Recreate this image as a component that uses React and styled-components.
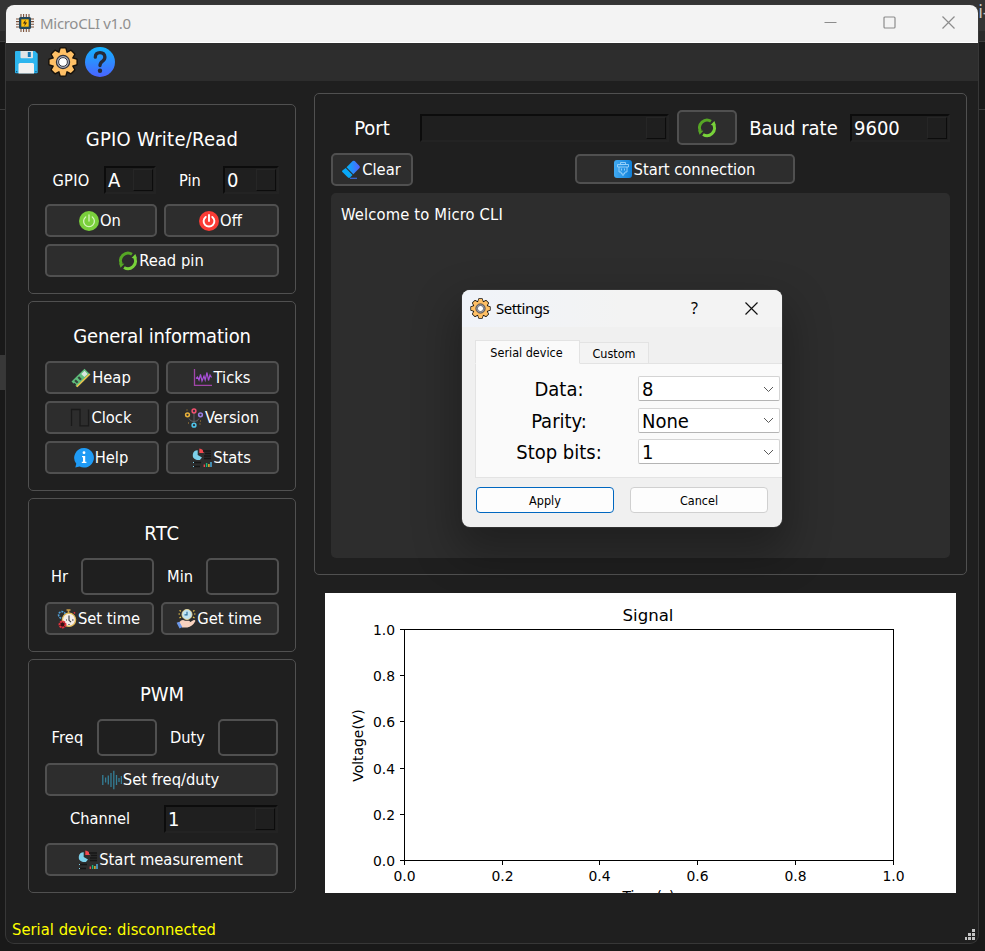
import React from "react";
import styled, { createGlobalStyle, css } from "styled-components";

const Global = createGlobalStyle`
  * { box-sizing: border-box; }
  body { margin: 0; background: #191919; }
  svg { display: block; flex: none; }
`;

const uiFont = css`
  font-family: "DejaVu Sans Condensed", "DejaVu Sans", sans-serif;
  font-stretch: condensed;
`;

/* ---------- desktop behind the window ---------- */
const Desktop = styled.div`
  position: relative;
  width: 985px;
  height: 951px;
  overflow: hidden;
  background: #191919;
`;
const BackBar = styled.div`
  height: ${(p) => p.$h}px;
  background: ${(p) => p.$bg};
`;
const BackText = styled.div`
  font: 17px/24px "DejaVu Sans", sans-serif;
  color: #c8c8c8;
  text-align: right;
  margin-right: -4px;
`;
const BackScroll = styled.div`
  width: 6px;
  height: 35px;
  background: #383838;
`;

/* ---------- main window ---------- */
const Window = styled.main`
  position: absolute;
  left: 6px;
  top: 5px;
  width: 972px;
  height: 938px;
  background: #1f1f1f;
  border-radius: 8px;
  box-shadow: 0 0 0 1px #373737;
  display: flex;
  flex-direction: column;
  overflow: hidden;
  color: #fff;
  ${uiFont}
`;
const TitleBar = styled.header`
  height: 38px;
  flex: none;
  background: #f3f3f3;
  border-bottom: 1px solid #fff;
  display: flex;
  align-items: center;
  padding: 0 23px 2px 10px;
`;
const WindowTitle = styled.h1`
  margin: 0 auto 0 6px;
  font: 400 15px "Noto Sans", sans-serif;
  color: #8f8f8f;
  letter-spacing: -0.3px;
`;
const Controls = styled.div`
  display: flex;
  gap: 46px;
`;
const Toolbar = styled.nav`
  height: 38px;
  flex: none;
  background: #2d2d2d;
  display: flex;
  align-items: center;
  padding: 0 5px;
  gap: 7px;
`;
const Body = styled.div`
  flex: 1;
  min-height: 0;
  display: flex;
  align-items: flex-start;
`;
const Sidebar = styled.div`
  width: 268px;
  margin: 23px 0 0 22px;
  display: flex;
  flex-direction: column;
  gap: 7px;
`;
const Main = styled.div`
  width: 653px;
  margin: 12px 0 0 18px;
`;
const Panel = styled.section`
  height: ${(p) => p.$h}px;
  border: 1px solid #505050;
  border-radius: 5px;
  padding: 0 16px 16px;
  display: flex;
  flex-direction: column;
  gap: 7px;
`;
const PanelTitle = styled.h2`
  margin: 0;
  padding-top: ${(p) => p.$top || 16}px;
  flex: 1;
  display: flex;
  align-items: center;
  justify-content: center;
  font-weight: 400;
  font-size: 20px;
  letter-spacing: ${(p) => p.$ls || 0}px;
`;
const Row = styled.div`
  display: grid;
  grid-template-columns: ${(p) => p.$cols};
  height: ${(p) => p.$h || 33}px;
  align-items: center;
  margin-bottom: ${(p) => p.$mb || 0}px;
`;
const Label = styled.span`
  font-size: ${(p) => p.$size || 16.3}px;
  letter-spacing: ${(p) => p.$ls || 0}px;
  line-height: 20px;
  padding-top: 1px;
  text-align: center;
  white-space: nowrap;
`;
const ButtonBox = styled.button`
  height: ${(p) => p.$h || 33}px;
  width: 100%;
  flex: none;
  background: #2d2d2d;
  border: 2px solid #505050;
  border-radius: 5px;
  color: #fff;
  display: flex;
  align-items: center;
  justify-content: center;
  gap: 1px;
  padding: 0;
  font-size: 16.4px;
  ${uiFont}
  white-space: nowrap;
`;
const Caption = styled.span`
  line-height: 20px;
  padding-top: 1px;
  margin-right: 2px;
`;
const Field = styled.input`
  width: 100%;
  height: 37px;
  background: #1f1f1f;
  border: 2px solid #505050;
  border-radius: 5px;
`;
const ComboBox = styled.div`
  width: 100%;
  height: 28px;
  border: 2px solid;
  border-color: #0c0c0c #232323 #232323 #0c0c0c;
  background: #1f1f1f;
  display: flex;
  align-items: center;
  justify-content: space-between;
  padding: 0 1px 0 2px;
  font-size: 20px;
`;
const ComboArrow = styled.i`
  width: 20px;
  height: 22px;
  border: 1px solid;
  border-color: #262626 #0c0c0c #0c0c0c #262626;
`;
const Group = styled.section`
  height: 482px;
  border: 1px solid #505050;
  border-radius: 5px;
  padding: 16px;
`;
const ActionRow = styled.div`
  display: flex;
  justify-content: space-between;
  align-items: flex-start;
  height: 33px;
  margin: 8px 155px 7px 0;
`;
const Slot = styled.div`
  width: ${(p) => p.$w}px;
  padding-top: ${(p) => p.$top || 0}px;
`;
const Console = styled.div`
  height: 365px;
  background: #2d2d2d;
  border-radius: 5px;
  padding: 12px 10px;
  font-size: 16.4px;
  line-height: 20px;
  letter-spacing: 0.16px;
`;
const Plot = styled.figure`
  margin: 18px 0 0 11px;
  width: 631px;
  height: 300px;
  background: #fff;
`;
const StatusBar = styled.footer`
  height: 28px;
  flex: none;
  display: flex;
  align-items: center;
  justify-content: space-between;
  padding: 0 3px 0 6px;
  font-size: 16.4px;
  letter-spacing: 0.04px;
  color: #ff0;
`;
const SizeGrip = styled.svg`
  margin-top: 11px;
`;

/* ---------- settings dialog ---------- */
const Dialog = styled.div`
  position: absolute;
  left: 462px;
  top: 290px;
  width: 320px;
  height: 237px;
  border-radius: 8px;
  background: #f0f0f0;
  box-shadow: 0 0 0 1px rgba(60, 60, 60, 0.6), 0 20px 44px 6px rgba(0, 0, 0, 0.3);
  overflow: hidden;
  color: #000;
  ${uiFont}
`;
const DialogBar = styled.header`
  height: 37px;
  background: linear-gradient(90deg, #f0f3f9, #f3f3f3 50%);
  display: flex;
  align-items: center;
  padding: 0 24px 1px 8px;
`;
const DialogTitle = styled.h2`
  margin: 0 auto 0 5px;
  font: 400 15px "Noto Sans", sans-serif;
  letter-spacing: -0.5px;
`;
const HelpMark = styled.span`
  font: 400 16px "Noto Sans", sans-serif;
  margin-right: 47px;
`;
const Tabs = styled.div`
  display: flex;
  align-items: flex-end;
  height: 24px;
  margin: 13px 0 0 13px;
`;
const Tab = styled.div`
  width: ${(p) => p.$w}px;
  height: ${(p) => (p.$on ? 24 : 22)}px;
  border: 1px solid #e3e3e3;
  border-bottom-color: ${(p) => (p.$on ? "#fafafa" : "#e3e3e3")};
  border-left-width: ${(p) => (p.$on ? 1 : 0)}px;
  background: ${(p) => (p.$on ? "#fafafa" : "#f3f3f3")};
  display: flex;
  align-items: center;
  justify-content: center;
  padding-right: ${(p) => (p.$on ? 2 : 0)}px;
  font-size: 12.5px;
`;
const TabPane = styled.div`
  height: 115px;
  margin: -1px 0 0 13px;
  border: 1px solid #e3e3e3;
  border-right: 0;
  background: #fafafa;
  padding: 12px 2px 0 0;
  display: grid;
  grid-template-columns: 162px 142px;
  grid-auto-rows: 25px;
  row-gap: 6.5px;
  align-content: start;
  align-items: center;
`;
const SettingLabel = styled(Label)`
  font-size: 20px;
  padding: 1px 0 0 4px;
`;
const Select = styled.div`
  height: 25px;
  border: 1px solid #d4d4d4;
  border-bottom-color: #b4b4b4;
  border-radius: 2px;
  background: #fff;
  display: flex;
  align-items: center;
  justify-content: space-between;
  padding: 1px 5px 0 3px;
  font-size: 20px;
`;
const DialogActions = styled.div`
  display: flex;
  gap: 16px;
  padding: 9px 14px;
`;
const DialogButton = styled.button`
  flex: 1;
  height: 26px;
  padding: 0;
  background: #fdfdfd;
  border: 1px solid ${(p) => (p.$primary ? "#0067c0" : "#d0d0d0")};
  border-radius: 4px;
  color: #000;
  font-size: 12.5px;
  ${uiFont}
`;

/* ---------- icons ---------- */
const ChipIcon = () => (
  <svg width="18" height="18" viewBox="0 0 18 18">
    <path d="M5 0v18M7.6 0v18M10.3 0v18M13 0v18M0 5h18M0 7.6h18M0 10.3h18M0 13h18" stroke="#7a5038" strokeWidth="1.1" />
    <rect x="3" y="3" width="12" height="12" rx="1.5" fill="#23485c" />
    <rect x="5.3" y="5.3" width="7.4" height="7.4" fill="#fdbf10" />
    <path d="M9.6 5.8 6.9 9.4h2l-.6 2.8 2.8-3.6H9.2z" fill="#3b2b14" />
  </svg>
);
const SaveIcon = () => (
  <svg width="30" height="30" viewBox="0 0 30 30">
    <path d="M5 4h19l2.700 2.700v18.600q0 1-1 1H5q-1 0-1-1V5q0-1 1-1z" fill="#2db5ee" />
    <path d="M9.500 4h12.500v6.200q0 1-1 1H10.500q-1 0-1-1z" fill="#dfe4e6" />
    <rect x="16.800" y="5" width="3" height="5" fill="#1478b4" />
    <path d="M7.500 17.500q0-1.500 1.500-1.500h12.500q1.500 0 1.500 1.500v9H7.500z" fill="#f1f1f1" />
    <path d="M5 24h1.300v1.300H5zM24.300 24h1.300v1.300h-1.300z" fill="#145a86" />
  </svg>
);
const TEETH = [0, 45, 90, 135, 180, 225, 270, 315];
const TOOTH = "M-4.200-7-2.300-13.400H2.300L4.200-7z";
const GearIcon = ({ size, line }) => (
  <svg width={size} height={size} viewBox="-15 -15 30 30">
    <g stroke="#15100a" strokeWidth={line} strokeLinejoin="round">
      {TEETH.map((a) => (
        <path key={a} d={TOOTH} transform={`rotate(${a})`} />
      ))}
      <circle r="9.800" />
    </g>
    <g fill="#ffc066">
      {TEETH.map((a) => (
        <path key={a} d={TOOTH} transform={`rotate(${a})`} />
      ))}
      <circle r="9.800" />
    </g>
    <circle r="6.600" fill="#a9adbb" stroke="#33333a" strokeWidth="1.200" />
    <circle r="4.400" fill="#fff" stroke="#3a3a42" strokeWidth="1" />
  </svg>
);
const QuestionIcon = () => (
  <svg width="30" height="30" viewBox="0 0 30 30">
    <defs>
      <linearGradient id="ask" x2="0" y2="1">
        <stop stopColor="#12b4ff" />
        <stop offset="1" stopColor="#4a63ff" />
      </linearGradient>
    </defs>
    <circle cx="15" cy="15" r="15" fill="url(#ask)" />
    <path d="M10.300 10.200Q10.300 5.600 15 5.600t4.900 4.500q0 2.600-2.500 4.200Q15 15.800 15 18.500" fill="none" stroke="#262b38" strokeWidth="3.300" strokeLinecap="round" />
    <circle cx="15" cy="23.800" r="2.200" fill="#262b38" />
  </svg>
);
const PowerIcon = ({ color, ink, width }) => (
  <svg width="20" height="20" viewBox="0 0 20 20">
    <circle cx="10" cy="10" r="10" fill={color} />
    <path d="M6.700 5.900a5.400 5.400 0 1 0 6.600 0M10 4v6" fill="none" stroke={ink} strokeWidth={width} strokeLinecap="round" />
  </svg>
);
const SyncIcon = () => (
  <svg width="20" height="20" viewBox="0 0 20 20">
    <path d="M14 3.200A7.500 7.500 0 0 0 3.400 13" fill="none" stroke="#56a625" strokeWidth="2.900" />
    <path d="M1 12.200 6.400 12.800 2.600 16.800z" fill="#56a625" />
    <path d="M6 16.500A7.500 7.500 0 0 0 16.600 6.700" fill="none" stroke="#78d23a" strokeWidth="2.900" />
    <path d="M19 7.500 13.600 6.900 17.400 2.900z" fill="#78d23a" />
  </svg>
);
const RamIcon = () => (
  <svg width="20" height="20" viewBox="0 0 20 20">
    <path d="M.5 13.500 13.500.7l5.800 5.800L6.300 19.300l-1.800-1.800.6-1-1.400-1.400-1.200.4z" fill="#5fbd7c" />
    <path d="m6.300 19.300 13-12.800-1.100-1.100-13 12.800z" fill="#f0c04a" />
    <path d="m10.200 5.900 3.300-3.200 3.200 3.200-3.300 3.200z" fill="#d9e6df" />
    <path d="m3.300 13 1.600-1.600 2.600 2.600-1.600 1.600zm3.200-3.200 1.600-1.600 2.700 2.700-1.600 1.600z" fill="#35453c" />
  </svg>
);
const TicksIcon = () => (
  <svg width="20" height="20" viewBox="0 0 20 20" fill="none">
    <path d="M1.500 1v16.300H19" stroke="#a046a8" strokeWidth="1.300" />
    <path d="M3 10.500 4.500 9 6 12 7.500 6.500 9 13 11 8l1.200 4L14 4.500l1.500 8L17 7l1.500 2.500" stroke="#a84fd8" strokeWidth="1.200" />
  </svg>
);
const ClockIcon = () => (
  <svg width="20" height="20" viewBox="0 0 20 20">
    <path d="M1.500 18V1.500h8.500v16.300h8.500V1.500" fill="none" stroke="#1a1a1a" strokeWidth="1.300" />
  </svg>
);
const VersionIcon = () => (
  <svg width="20" height="20" viewBox="0 0 20 20" fill="none">
    <path d="M5 10.500q1 3 5 3t5-3M10 5v9" stroke="#65656b" strokeWidth=".9" />
    <path d="M2.500 2h1M16 13h1M4 15h1M15.500 16h1" stroke="#b98a3a" />
    <g fill="#33333a" strokeWidth="1.500">
      <circle cx="10" cy="3" r="1.900" stroke="#f0506e" />
      <circle cx="3.500" cy="6.800" r="1.900" stroke="#e8b13a" />
      <circle cx="16.500" cy="6.800" r="1.900" stroke="#9a7de0" />
      <circle cx="10" cy="17.200" r="1.900" stroke="#4fc3e8" />
    </g>
  </svg>
);
const InfoIcon = () => (
  <svg width="20" height="20" viewBox="0 0 20 20">
    <path d="M10 0a9.800 9.800 0 1 1-4.400 18.500L1.300 19.600l1-3.800A9.800 9.800 0 0 1 10 0z" fill="#1f9bf5" />
    <circle cx="10" cy="4.700" r="1.400" fill="#fff" />
    <path d="M8 8h3.200v5.700h1.200V15H7.800v-1.300H9V9.300H8z" fill="#fff" />
  </svg>
);
const StatsIcon = () => (
  <svg width="20" height="20" viewBox="0 0 20 20">
    <path d="M5.700 2.200V7l4.300 2.400A4.900 4.900 0 1 1 5.700 2.200z" fill="#7dd0ea" />
    <path d="M7.300.5a5 5 0 0 1 4.500 4.500H7.300z" fill="#f0484e" />
    <path d="M11 3h8M13 5.500h6M12 8h7M12 10.500h7M2 14.500h7M2 18.500h6" stroke="#161616" strokeWidth="1.300" />
    <path d="M1 14.500h1M1 18.500h1" stroke="#7dd0ea" />
    <path d="M12.300 19v-2.500" stroke="#f0484e" strokeWidth="1.400" />
    <path d="M14.600 19v-4" stroke="#19b87a" strokeWidth="1.400" />
    <path d="M16.900 19v-3" stroke="#f3bb32" strokeWidth="1.400" />
    <path d="M19 19v-5" stroke="#4fb4e8" strokeWidth="1.400" />
  </svg>
);
const StopwatchIcon = () => (
  <svg width="20" height="20" viewBox="0 0 20 20">
    <circle cx="5" cy="6" r="3.400" fill="none" stroke="#4f9fd8" strokeWidth="1.600" strokeDasharray="2 1" />
    <path d="M9.500 1h4M11.500 1v3" stroke="#caa04a" strokeWidth="1.600" />
    <path d="m16.800 4.300 1.200-1" stroke="#e0303c" strokeWidth="1.600" />
    <circle cx="12" cy="10.800" r="6.600" fill="#f4eee8" stroke="#e3bb5a" strokeWidth="1.300" />
    <path d="M12 6.500v4.800l2 1.800M9 11h1M15 11h1.500M12 15v1" stroke="#33333a" fill="none" strokeWidth="1.100" />
    <circle cx="5.500" cy="15.500" r="3" fill="#3a1014" stroke="#e0303c" strokeWidth="2" strokeDasharray="2.200 .6" />
  </svg>
);
const HandClockIcon = () => (
  <svg width="20" height="20" viewBox="0 0 20 20">
    <circle cx="11" cy="5.500" r="5" fill="#bfe3f2" stroke="#f0e0a0" strokeWidth=".9" />
    <path d="M11 2.800v3H8.500" stroke="#2c6f9a" fill="none" strokeWidth="1.200" />
    <path d="M3.500 1.500 5 2.300M2.500 5H4M3.500 9 5 8M18.500 1.500 17 2.300M19.500 5H18M18.500 9 17 8" stroke="#f0c848" strokeWidth="1.200" />
    <path d="M3 13.500q3-3.800 6-1.800h4q1.500.2.800 1.600l4-2.200q1.800-.3 1.500 1.200-3 5.600-8 6.100H6z" fill="#f9d3c0" />
    <path d="m.6 13.700 2.700-.9 3 5.200-2.700 1.500z" fill="#6c98ea" />
  </svg>
);
const WaveIcon = () => (
  <svg width="20" height="20" viewBox="0 0 20 20">
    <path d="M.8 5v10M3.600 7.500v5M6.300 5.500v9M9 3v14M11.800.8v18.400M14.500 5v10M17 8v4M19.400 6v8" stroke="#347f98" strokeWidth="1.300" />
  </svg>
);
const EraserIcon = () => (
  <svg width="20" height="20" viewBox="0 0 20 20">
    <defs>
      <linearGradient id="rub" x1="0" x2="1">
        <stop stopColor="#00b4f5" />
        <stop offset="1" stopColor="#5560ff" />
      </linearGradient>
    </defs>
    <path d="m5.500 7.200 6.200-6.100q1-.9 2 0l4.800 5q.8.900 0 1.800l-6.200 6.300z" fill="url(#rub)" />
    <path d="m4.700 8 6.800 7-2.500 2.600q-1 .9-2 0l-5.600-5.500q-.9-.9 0-1.700z" fill="#08a8f8" />
    <path d="M9 18.200h7" stroke="#3c78ff" strokeWidth="1.100" />
  </svg>
);
const SerialIcon = () => (
  <svg width="20" height="20" viewBox="0 0 20 20">
    <defs>
      <linearGradient id="plug">
        <stop stopColor="#41aaf2" />
        <stop offset="1" stopColor="#0f7fd8" />
      </linearGradient>
    </defs>
    <rect x="1" y="1" width="18" height="18" rx="3" fill="url(#plug)" />
    <path d="M7.500 3.500h5v2h-5zM4.500 5.500h11v2.500h-11zM6 8v5h2l.5 2h3l.5-2h2V8M10 15v2M8.500 9.500v2M11.500 9.500v2" fill="none" stroke="#9bd2fb" strokeWidth=".9" />
  </svg>
);
const Chevron = () => (
  <svg width="11" height="7" viewBox="0 0 11 7">
    <path d="m1 1 4.500 4.500L10 1" fill="none" stroke="#5a5a5a" />
  </svg>
);

const Button = ({ icon, h, children }) => (
  <ButtonBox $h={h}>
    {icon}
    {children && <Caption>{children}</Caption>}
  </ButtonBox>
);

const Combo = ({ children }) => (
  <ComboBox>
    <span>{children}</span>
    <ComboArrow />
  </ComboBox>
);

const YTICKS = [["1.0", 36.5], ["0.8", 82.5], ["0.6", 128.5], ["0.4", 175.5], ["0.2", 221.5], ["0.0", 267.5]];
const XTICKS = [["0.0", 79.5], ["0.2", 177.5], ["0.4", 274.5], ["0.6", 372.5], ["0.8", 470.5], ["1.0", 568.5]];

const Chart = styled.svg`
  font-family: "DejaVu Sans", sans-serif;
  font-stretch: normal;
  font-size: 13.9px;
`;
const ChartTitle = styled.text`
  font-size: 16.6px;
`;

const SignalChart = () => (
  <Chart width="631" height="300" viewBox="0 0 631 300">
    <rect x="79.500" y="36.500" width="489" height="231" fill="none" stroke="#000" />
    {YTICKS.map(([t, y]) => (
      <g key={t}>
        <path d={`M75 ${y}h4`} stroke="#000" />
        <text x="70" y={y + 5} textAnchor="end">{t}</text>
      </g>
    ))}
    {XTICKS.map(([t, x]) => (
      <g key={t}>
        <path d={`M${x} 268v4`} stroke="#000" />
        <text x={x} y="288" textAnchor="middle">{t}</text>
      </g>
    ))}
    <ChartTitle x="323" y="27.500" textAnchor="middle">Signal</ChartTitle>
    <text x="323.500" y="307.500" textAnchor="middle">Time(s)</text>
    <text transform="translate(38 152.500) rotate(-90)" textAnchor="middle">Voltage(V)</text>
  </Chart>
);

export default function App() {
  return (
    <Desktop>
      <Global />
      <BackBar $h={31} $bg="#343434"><BackText>i-</BackText></BackBar>
      <BackBar $h={10} $bg="#2a2a2a" />
      <BackBar $h={1} $bg="#3c3c3c" />
      <BackBar $h={67} $bg="#191919" />
      <BackBar $h={1} $bg="#3a3a3a" />
      <BackBar $h={245} $bg="#191919" />
      <BackScroll />

      <Window>
        <TitleBar>
          <ChipIcon />
          <WindowTitle>MicroCLI v1.0</WindowTitle>
          <Controls>
            <svg width="13" height="13"><path d="M.5 6.500h12" stroke="#8c8c8c" /></svg>
            <svg width="13" height="13"><rect x="1" y="1" width="11" height="11" rx="1" fill="none" stroke="#8c8c8c" strokeWidth="1.200" /></svg>
            <svg width="13" height="13"><path d="m.5.500 12 12m0-12-12 12" stroke="#8c8c8c" strokeWidth="1.200" /></svg>
          </Controls>
        </TitleBar>
        <Toolbar>
          <SaveIcon />
          <GearIcon size={30} line={2.8} />
          <QuestionIcon />
        </Toolbar>

        <Body>
          <Sidebar>
            <Panel $h={190}>
              <PanelTitle $ls={0.27} $top={14}>GPIO Write/Read</PanelTitle>
              <Row $cols="52px 7px 52px 15px 38px 14px 56px" $h={28} $mb={3}>
                <Label $ls={0.3}>GPIO</Label><i /><Combo>A</Combo><i /><Label>Pin</Label><i /><Combo>0</Combo>
              </Row>
              <Row $cols="112px 7px 115px">
                <Button icon={<PowerIcon color="#7ad03c" ink="#d6f5bd" width="1.300" />}>On</Button><i />
                <Button icon={<PowerIcon color="#fb3c35" ink="#fff" width="1.900" />}>Off</Button>
              </Row>
              <Button icon={<SyncIcon />}>Read pin</Button>
            </Panel>

            <Panel $h={190}>
              <PanelTitle $ls={-0.15}>General information</PanelTitle>
              <Row $cols="114px 7px 113px">
                <Button icon={<RamIcon />}>Heap</Button><i /><Button icon={<TicksIcon />}>Ticks</Button>
              </Row>
              <Row $cols="114px 7px 113px">
                <Button icon={<ClockIcon />}>Clock</Button><i /><Button icon={<VersionIcon />}>Version</Button>
              </Row>
              <Row $cols="114px 7px 113px">
                <Button icon={<InfoIcon />}>Help</Button><i /><Button icon={<StatsIcon />}>Stats</Button>
              </Row>
            </Panel>

            <Panel $h={154}>
              <PanelTitle $ls={0.7}>RTC</PanelTitle>
              <Row $cols="29px 7px 73px 7px 38px 7px 73px" $h={37}>
                <Label>Hr</Label><i /><Field /><i /><Label>Min</Label><i /><Field />
              </Row>
              <Row $cols="109px 7px 118px">
                <Button icon={<StopwatchIcon />}>Set time</Button><i /><Button icon={<HandClockIcon />}>Get time</Button>
              </Row>
            </Panel>

            <Panel $h={234}>
              <PanelTitle>PWM</PanelTitle>
              <Row $cols="45px 7px 60px 7px 47px 7px 60px" $h={37}>
                <Label $ls={0.2}>Freq</Label><i /><Field /><i /><Label>Duty</Label><i /><Field />
              </Row>
              <Row $cols="233px"><Button icon={<WaveIcon />}>Set freq/duty</Button></Row>
              <Row $cols="110px 9px 114px" $h={31} $mb={2}>
                <Label>Channel</Label><i /><Combo>1</Combo>
              </Row>
              <Row $cols="233px"><Button icon={<StatsIcon />}>Start measurement</Button></Row>
            </Panel>
          </Sidebar>

          <Main>
            <Group>
              <Row $cols="82px 7px 249px 8px 60px 7px 99px 7px 100px" $h={35}>
                <Label $size={20}>Port</Label><i /><Combo /><i />
                <Button h={35} icon={<SyncIcon />} /><i />
                <Label $size={20}>Baud rate</Label><i /><Combo>9600</Combo>
              </Row>
              <ActionRow>
                <Slot $w={82}><Button icon={<EraserIcon />}>Clear</Button></Slot>
                <Slot $w={220} $top={1}><Button h={30} icon={<SerialIcon />}>Start connection</Button></Slot>
              </ActionRow>
              <Console>Welcome to Micro CLI</Console>
            </Group>
            <Plot><SignalChart /></Plot>
          </Main>
        </Body>

        <StatusBar>
          <span>Serial device: disconnected</span>
          <SizeGrip width="10" height="11" viewBox="0 0 10 11">
            <path d="M7 0h3v3H7zM3 4h3v3H3zM7 4h3v3H7zM0 8h2v3H0zM3 8h3v3H3zM7 8h3v3H7z" fill="#c4c4c4" />
          </SizeGrip>
        </StatusBar>
      </Window>

      <Dialog>
        <DialogBar>
          <GearIcon size={21} line={2.2} />
          <DialogTitle>Settings</DialogTitle>
          <HelpMark>?</HelpMark>
          <svg width="13" height="13"><path d="m.5.500 12 12m0-12-12 12" stroke="#111" strokeWidth="1.200" /></svg>
        </DialogBar>
        <Tabs>
          <Tab $on $w={105}>Serial device</Tab>
          <Tab $w={69}>Custom</Tab>
        </Tabs>
        <TabPane>
          <SettingLabel>Data:</SettingLabel><Select>8<Chevron /></Select>
          <SettingLabel>Parity:</SettingLabel><Select>None<Chevron /></Select>
          <SettingLabel>Stop bits:</SettingLabel><Select>1<Chevron /></Select>
        </TabPane>
        <DialogActions>
          <DialogButton $primary>Apply</DialogButton>
          <DialogButton>Cancel</DialogButton>
        </DialogActions>
      </Dialog>
    </Desktop>
  );
}
